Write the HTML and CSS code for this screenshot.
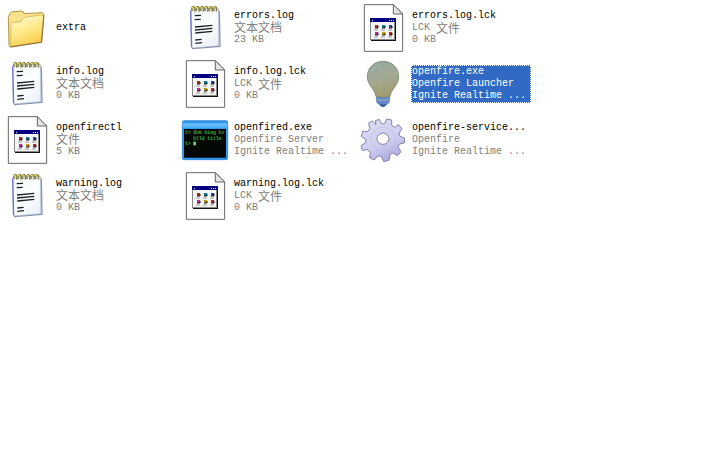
FILE: index.html
```
<!DOCTYPE html>
<html lang="zh-CN">
<head>
    <meta charset="UTF-8">
    <meta name="viewport" content="width=device-width, initial-scale=1.0">
    <title>openfire</title>
    <link rel="stylesheet" href="styles.css">
</head>
<body>
    <!-- shared icons, drawn at three units per pixel -->
    <svg class="defs" aria-hidden="true">
        <defs>
            <linearGradient id="folder-fill" x1="0" y1="0" x2="0.4" y2="1">
                <stop offset="0" stop-color="#fffce0"/>
                <stop offset="0.5" stop-color="#ffec94"/>
                <stop offset="1" stop-color="#fbd050"/>
            </linearGradient>
            <linearGradient id="paper-fill" x1="0" y1="0" x2="1" y2="1">
                <stop offset="0" stop-color="#f2f8fa"/>
                <stop offset="0.5" stop-color="#fcfefe"/>
                <stop offset="1" stop-color="#e8eef6"/>
            </linearGradient>
            <linearGradient id="bulb-fill" x1="0" y1="0" x2="0.2" y2="1">
                <stop offset="0" stop-color="#93a6a0"/>
                <stop offset="0.5" stop-color="#a3ab95"/>
                <stop offset="1" stop-color="#a19a70"/>
            </linearGradient>
            <linearGradient id="gear-fill" x1="0.2" y1="0" x2="0.7" y2="1">
                <stop offset="0" stop-color="#dcdcf0"/>
                <stop offset="0.6" stop-color="#ccccf0"/>
                <stop offset="1" stop-color="#a4a4dc"/>
            </linearGradient>
            <linearGradient id="bar-fill" x1="0" y1="0" x2="0" y2="1">
                <stop offset="0" stop-color="#1c86e0"/>
                <stop offset="0.5" stop-color="#6cc4fc"/>
                <stop offset="1" stop-color="#3ca4f4"/>
            </linearGradient>
        </defs>

        <symbol id="notepad" viewBox="9 12 144 144">
            <path d="M42 146 L126 139 L124 32" fill="none" stroke="#8e98a8" stroke-width="4"/>
            <path d="M38 31 Q38 27 43 27 L118 25 Q122 25 122 30 L123 134 Q123 138 118 138 L46 144 Q40 144 40 139 Z" fill="url(#paper-fill)" stroke="#8295bd" stroke-width="2"/>
            <path d="M38 32 L41 142" stroke="#7272cf" stroke-width="4"/>
            <g fill="none" stroke="#8b8550" stroke-width="5">
                <path d="M43 33 q-4 -11 3 -13 q7 1 4 15"/>
                <path d="M56 33 q-4 -11 3 -13 q7 1 4 15"/>
                <path d="M69 33 q-4 -11 3 -13 q7 1 4 15"/>
                <path d="M82 33 q-4 -11 3 -13 q7 1 4 15"/>
                <path d="M95 33 q-4 -11 3 -13 q7 1 4 15"/>
                <path d="M108 33 q-4 -11 3 -13 q7 1 4 15"/>
            </g>
            <path d="M41 23 h6 M54 23 h6 M67 23 h6 M80 23 h6 M93 22 h6 M106 22 h6" stroke="#dccb58" stroke-width="5"/>
            <path d="M50 47 L69 46 M50 59 L68 58 M51 81 L103 76 M51 90 L103 85 M52 99 L103 94 M52 120 L71 118 M52 130 L72 128" stroke="#1c2226" stroke-width="4"/>
        </symbol>

        <symbol id="file" viewBox="9 12 144 144">
            <path d="M25 14 H112 L140 42 V154 H25 Z" fill="#ffffff" stroke="#666666" stroke-width="3"/>
            <path d="M112 14 L140 42 H112 Z" fill="#e4e4e4" stroke="#666666" stroke-width="3"/>
            <path d="M45 54 H120 V123 H45 Z" fill="#111122"/>
            <path d="M42 54 H117 V120 H42 Z" fill="#888888"/>
            <path d="M45 66 H114 V117 H45 Z" fill="#f4f4f4"/>
            <path d="M42 54 H120 V66 H42 Z" fill="#000080"/>
            <path d="M48 60 h3 v3 h-3 z M99 60 h3 v3 h-3 z M105 60 h3 v3 h-3 z M111 60 h3 v3 h-3 z" fill="#ffffff"/>
            <path d="M57 75 h9 v9 h-9 z" fill="#c02818"/>
            <path d="M78 75 h9 v9 h-9 z" fill="#087898"/>
            <path d="M99 75 h9 v9 h-9 z" fill="#1848b8"/>
            <path d="M57 96 h9 v9 h-9 z" fill="#d020a8"/>
            <path d="M78 96 h9 v9 h-9 z" fill="#c09810"/>
            <path d="M99 96 h9 v9 h-9 z" fill="#c82018"/>
            <path d="M57 84 h9 v-6 M78 84 h9 v-6 M99 84 h9 v-6 M57 105 h9 v-6 M78 105 h9 v-6 M99 105 h9 v-6" fill="none" stroke="#222222" stroke-width="3"/>
            <path d="M54 90 h12 M75 90 h12 M96 90 h12 M54 111 h12 M75 111 h12 M96 111 h12" stroke="#777777" stroke-width="2"/>
        </symbol>
    </svg>

    <main class="files">
        <div class="item">
            <svg class="icon" viewBox="9 12 144 144" aria-hidden="true">
                <path d="M25 50 L31 40 Q33 35 39 35 L65 33 Q70 34 72 41 L126 38 Q132 39 131 46 L124 125 L33 141 Q28 141 27 134 Z" fill="#fae28c" stroke="#b39745" stroke-width="3"/>
                <path d="M33 71 Q33 67 38 67 L60 66 L73 52 L125 45 Q131 45 130 51 L123 125 L32 139 Z" fill="url(#folder-fill)" stroke="#cba847" stroke-width="2"/>
                <path d="M132 46 L125 127 L32 141" fill="none" stroke="#86703c" stroke-width="3"/>
            </svg>
            <div class="info">
                <div class="name">extra</div>
            </div>
        </div>
        <div class="item">
            <svg class="icon" aria-hidden="true"><use href="#notepad"/></svg>
            <div class="info">
                <div class="name">errors.log</div>
                <div class="cjk">文本文档</div>
                <div>23 KB</div>
            </div>
        </div>
        <div class="item">
            <svg class="icon" aria-hidden="true"><use href="#file"/></svg>
            <div class="info">
                <div class="name">errors.log.lck</div>
                <div class="type">LCK <span class="cjk">文件</span></div>
                <div>0 KB</div>
            </div>
        </div>
        <div class="item">
            <svg class="icon" aria-hidden="true"><use href="#notepad"/></svg>
            <div class="info">
                <div class="name">info.log</div>
                <div class="cjk">文本文档</div>
                <div>0 KB</div>
            </div>
        </div>
        <div class="item">
            <svg class="icon" aria-hidden="true"><use href="#file"/></svg>
            <div class="info">
                <div class="name">info.log.lck</div>
                <div class="type">LCK <span class="cjk">文件</span></div>
                <div>0 KB</div>
            </div>
        </div>
        <div class="item selected">
            <svg class="icon" viewBox="9 12 144 144" aria-hidden="true">
                <path d="M61 119 Q81 127 101 119 L100 137 Q98 143 92 145 Q89 152 81 152 Q73 152 70 145 Q64 143 62 137 Z" fill="#6488c8" stroke="#4c72b4" stroke-width="2"/>
                <path d="M64 131 Q82 137 99 130" fill="none" stroke="#9db5dc" stroke-width="3"/>
                <path d="M70 144 Q82 147 92 144 Q88 152 81 152 Q73 152 70 144 Z" fill="#34568e"/>
                <path d="M81 16 C108 16 128 36 128 62 C128 88 105 99 102 121 Q81 127 60 121 C57 99 34 88 34 62 C34 36 54 16 81 16 Z" fill="url(#bulb-fill)" stroke="#82907e" stroke-width="3"/>
                <path d="M73 119 L68 84 M89 119 L94 84" fill="none" stroke="#aea67e" stroke-width="3"/>
                <path d="M48 47 Q55 30 76 27" fill="none" stroke="#a4b3aa" stroke-width="5"/>
            </svg>
            <div class="info">
                <div class="name">openfire.exe</div>
                <div>Openfire Launcher</div>
                <div>Ignite Realtime ...</div>
            </div>
        </div>
        <div class="item">
            <svg class="icon" aria-hidden="true"><use href="#file"/></svg>
            <div class="info">
                <div class="name">openfirectl</div>
                <div class="cjk">文件</div>
                <div>5 KB</div>
            </div>
        </div>
        <div class="item">
            <svg class="icon" viewBox="9 12 144 144" aria-hidden="true">
                <rect x="13" y="26" width="136" height="117" rx="5" fill="#3098ee" stroke="#1674d0" stroke-width="2"/>
                <rect x="14" y="27" width="134" height="22" rx="4" fill="url(#bar-fill)"/>
                <path d="M18 51 H144 V137 H18 Z" fill="#020803"/>
                <g class="term">
                    <text x="21" y="67">t&gt; Ook hing to</text>
                    <text x="46" y="83">blld title</text>
                    <text x="21" y="99">t&gt;</text>
                </g>
                <path d="M46 89 h8 v11 h-8 z" fill="#66d866"/>
            </svg>
            <div class="info">
                <div class="name">openfired.exe</div>
                <div>Openfire Server</div>
                <div>Ignite Realtime ...</div>
            </div>
        </div>
        <div class="item">
            <svg class="icon" viewBox="9 12 144 144" aria-hidden="true">
                <path fill-rule="evenodd" d="M58 26 L70 22 L76 35 L86 35 L92 21 L107 24 L107 40 L116 46 L128 38 L138 51 L129 63 L132 73 L146 78 L145 93 L130 96 L126 105 L135 119 L124 131 L110 123 L102 128 L99 145 L83 149 L76 133 L66 132 L54 144 L41 137 L43 121 L36 113 L20 115 L15 101 L29 92 L29 82 L16 73 L20 58 L36 58 L42 49 L37 34 L49 27 L60 38 Z M81 63 A18 17 0 1 0 81 97 A18 17 0 1 0 81 63 Z" fill="url(#gear-fill)" stroke="#8484ac" stroke-width="3" stroke-linejoin="round"/>
                <ellipse cx="81" cy="82" rx="37" ry="36" fill="none" stroke="#bcbce0" stroke-width="2"/>
            </svg>
            <div class="info">
                <div class="name">openfire-service...</div>
                <div>Openfire</div>
                <div>Ignite Realtime ...</div>
            </div>
        </div>
        <div class="item">
            <svg class="icon" aria-hidden="true"><use href="#notepad"/></svg>
            <div class="info">
                <div class="name">warning.log</div>
                <div class="cjk">文本文档</div>
                <div>0 KB</div>
            </div>
        </div>
        <div class="item">
            <svg class="icon" aria-hidden="true"><use href="#file"/></svg>
            <div class="info">
                <div class="name">warning.log.lck</div>
                <div class="type">LCK <span class="cjk">文件</span></div>
                <div>0 KB</div>
            </div>
        </div>
    </main>
</body>
</html>
```
FILE: styles.css
```
body {
    margin: 0;
    background: #ffffff;
    color: #808080;
    font-family: "Liberation Mono", "Noto Sans CJK SC", monospace;
    font-size: 10px;
    line-height: 12px;
}
.defs {
    display: block;
    width: 0;
    height: 0;
}
.files {
    display: grid;
    grid-template-columns: repeat(3, 178px);
    grid-auto-rows: 56px;
}
.item {
    display: flex;
    align-items: center;
    gap: 4px;
    padding-left: 3px;
}
.icon {
    flex: none;
    width: 48px;
    height: 48px;
}
.info {
    border: 1px solid transparent;
    white-space: nowrap;
}
.info div {
    height: 12px;
}
.name {
    color: #000000;
}
.type {
    display: flex;
    align-items: center;
    gap: 6px;
}
.cjk {
    font-family: "Noto Sans CJK SC", sans-serif;
    font-size: 12px;
    line-height: 10px;
}
.selected .info {
    width: 118px;
    background: #316ac5;
    border: 1px dotted #ffffff;
    color: #ffffff;
}
.selected .name {
    color: #ffffff;
}
.term {
    fill: #3fae3f;
    font-family: "Liberation Mono", monospace;
    font-size: 14px;
    font-weight: bold;
}
```
